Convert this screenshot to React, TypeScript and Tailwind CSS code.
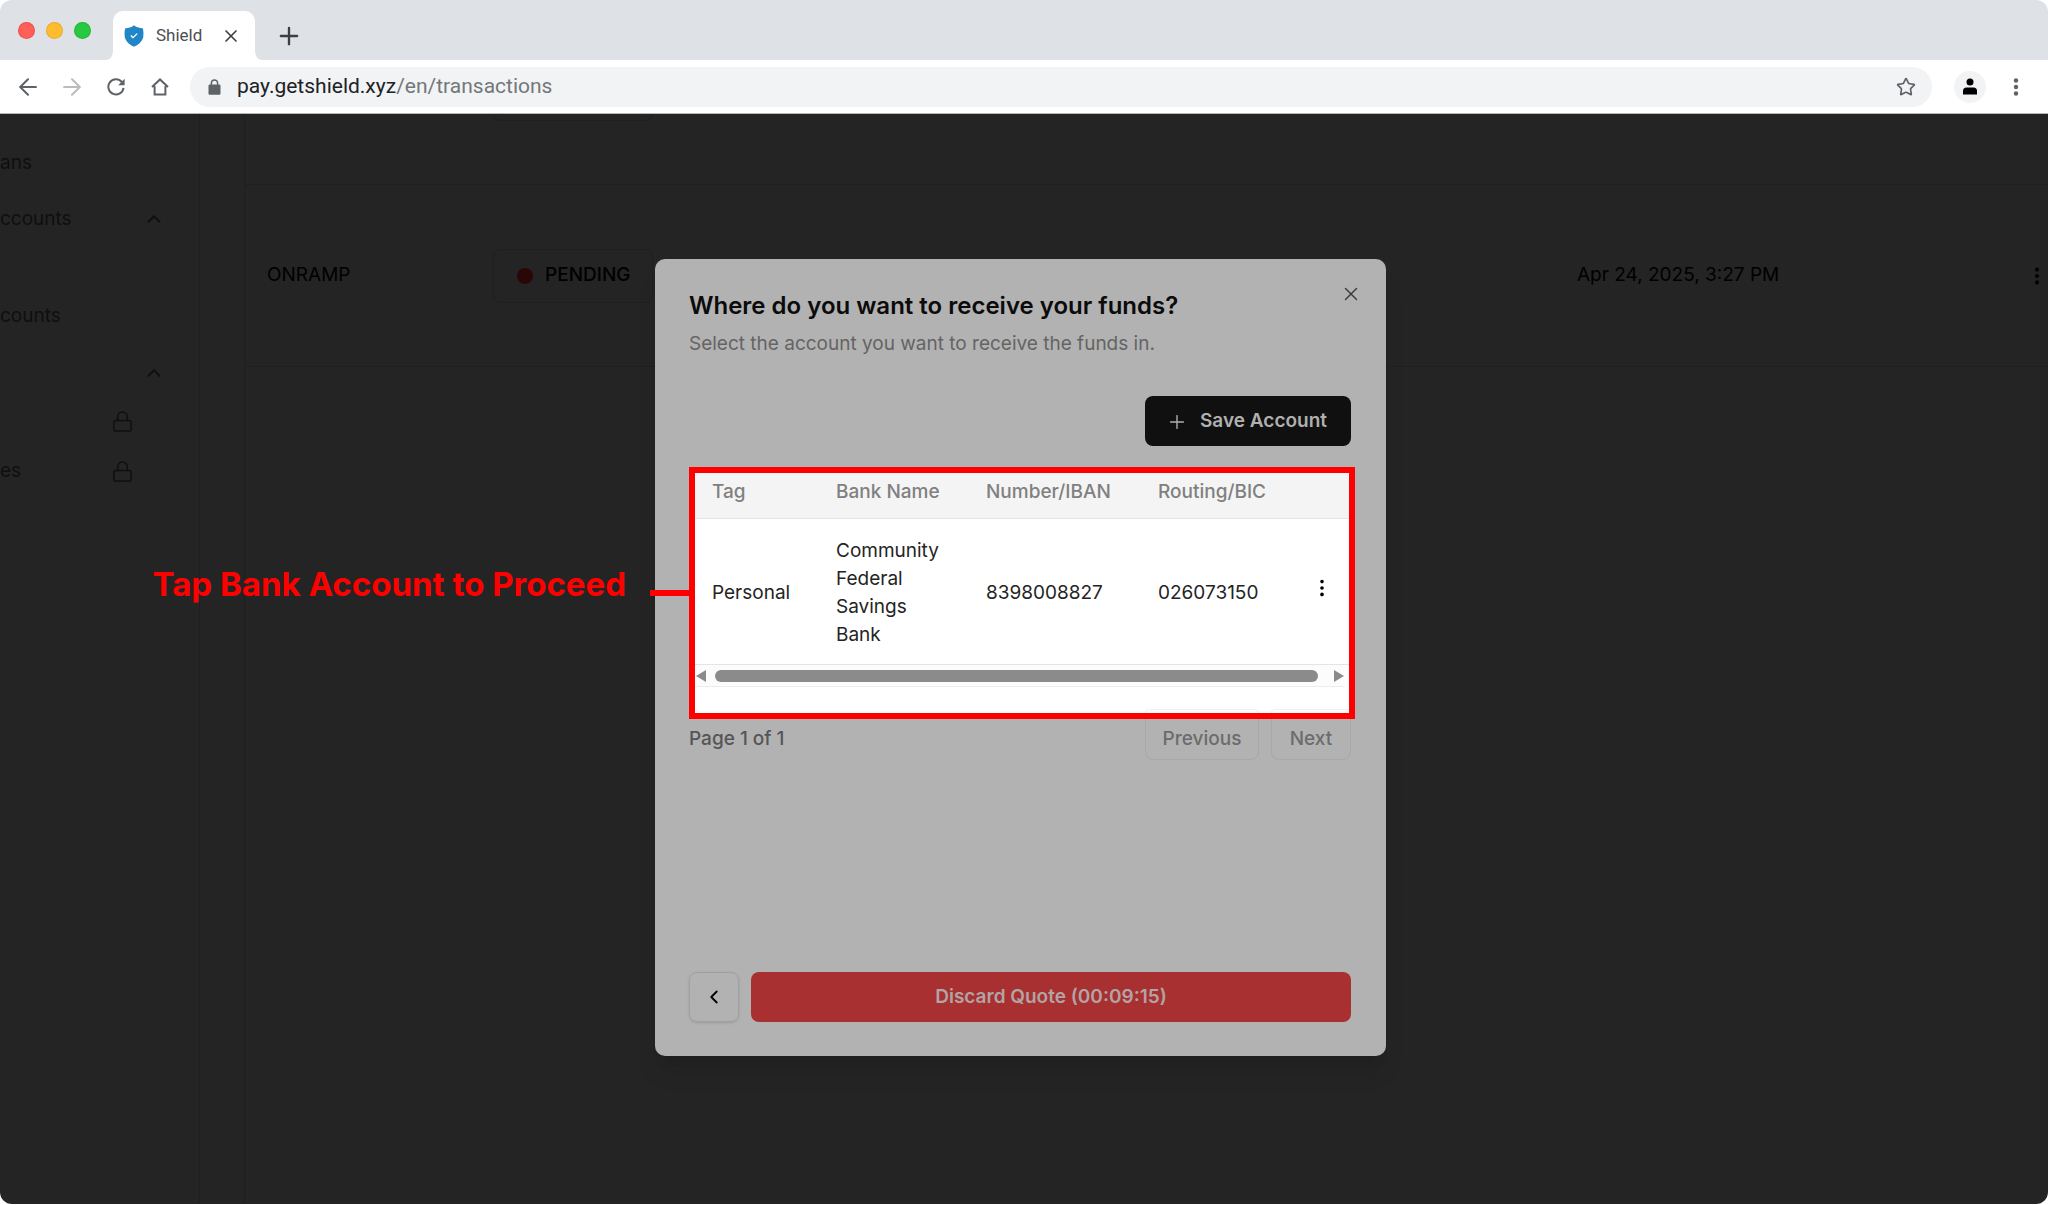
import type { ReactNode } from "react";
import { ChevronLeft, ChevronUp, Lock, MoreVertical, Plus, Star, X } from "lucide-react";

const account = {
  tag: "Personal",
  bank: "Community Federal Savings Bank",
  number: "8398008827",
  routing: "026073150",
};

function ShieldLogo() {
  return (
    <svg viewBox="0 0 20 22" className="h-[22px] w-5" aria-hidden>
      <path
        d="M10 0.3 L12 1.8 Q15 3.2 19 3.4 Q19.9 8 19.2 12.5 Q17.5 18.5 10 21.8 Q2.5 18.5 0.8 12.5 Q0.1 8 1 3.4 Q5 3.2 8 1.8 Z"
        fill="#2186c8"
      />
      <path d="M6.8 10.6 L9 12.6 L13.2 8.6" fill="none" stroke="#fff" strokeWidth="1.3" />
    </svg>
  );
}

function ToolIcon({ children }: { children: ReactNode }) {
  return (
    <svg
      viewBox="0 0 18 18"
      className="size-[18px]"
      fill="none"
      stroke="currentColor"
      strokeWidth="2"
      strokeLinecap="round"
      aria-hidden
    >
      {children}
    </svg>
  );
}

function TabBar() {
  return (
    <div className="flex h-[60px] items-end bg-[#dee1e6] pl-[18px]">
      <div className="mb-[21px] flex gap-[11px]">
        <span className="size-[17px] rounded-full border border-[#e0443e]/60 bg-[#ff5f57]" />
        <span className="size-[17px] rounded-full border border-[#dea123]/60 bg-[#febc2e]" />
        <span className="size-[17px] rounded-full border border-[#1aab29]/60 bg-[#28c840]" />
      </div>
      <div className="ml-[14px] flex items-end">
        <svg viewBox="0 0 8 10" className="h-[10px] w-2" aria-hidden>
          <path d="M8 0 Q8 10 0 10 H8 Z" fill="#fff" />
        </svg>
        <div className="flex h-[49px] w-[142px] items-center rounded-t-[10px] bg-white pl-[11px]">
          <ShieldLogo />
          <span className="ml-3 text-[17px] text-[#4b4e52]">Shield</span>
          <button type="button" aria-label="Close tab" className="ml-[19px] text-[#3c4043]">
            <X size={20} strokeWidth={2} />
          </button>
        </div>
        <svg viewBox="0 0 8 10" className="h-[10px] w-2" aria-hidden>
          <path d="M0 0 Q0 10 8 10 H0 Z" fill="#fff" />
        </svg>
      </div>
      <button type="button" aria-label="New tab" className="mb-[10px] ml-3 text-[#3c4043]">
        <Plus size={28} strokeWidth={2} />
      </button>
    </div>
  );
}

function Toolbar() {
  return (
    <div className="flex h-[54px] items-center border-b border-[#b4b4b4] bg-white pl-[19px] text-[#5f6368]">
      <div className="flex gap-[26px]">
        <button type="button" aria-label="Back">
          <ToolIcon>
            <path d="M17 9 H1.5 M9 1.2 L1.2 9 L9 16.8" />
          </ToolIcon>
        </button>
        <button type="button" aria-label="Forward" className="text-[#babcbe]">
          <ToolIcon>
            <path d="M1 9 H16.5 M9 1.2 L16.8 9 L9 16.8" />
          </ToolIcon>
        </button>
        <button type="button" aria-label="Reload">
          <ToolIcon>
            <path d="M14.8 4 A7.6 7.6 0 1 0 16.5 9.8" strokeLinecap="butt" />
            <path d="M17.6 0.8 V7.2 H11.2 Z" fill="currentColor" stroke="none" />
          </ToolIcon>
        </button>
        <button type="button" aria-label="Home">
          <ToolIcon>
            <path d="M1 9 L9 1.4 L17 9 M3.6 8 V16.6 H14.4 V8" strokeLinecap="butt" />
          </ToolIcon>
        </button>
      </div>
      <div className="ml-[21px] flex h-10 flex-1 items-center rounded-full bg-[#f1f3f4] pr-4 pl-[18px]">
        <svg viewBox="0 0 13 16" className="h-4 w-[13px]" aria-hidden>
          <rect x="0.5" y="5.5" width="12" height="10.3" rx="1.2" fill="currentColor" />
          <path
            d="M3.4 6 V4 A3.1 3.1 0 0 1 9.6 4 V6"
            fill="none"
            stroke="currentColor"
            strokeWidth="1.5"
          />
        </svg>
        <a href="#" className="ml-4 text-[21px] text-[#74777a]">
          <span className="text-[#202124]">pay.getshield.xyz</span>/en/transactions
        </a>
        <button type="button" aria-label="Bookmark" className="ml-auto">
          <Star size={20} strokeWidth={2} strokeLinejoin="miter" />
        </button>
      </div>
      <button
        type="button"
        aria-label="Profile"
        className="ml-[22px] flex size-8 items-center justify-center rounded-full bg-[#f1f3f4] text-black"
      >
        <svg viewBox="0 0 14 17" className="h-[17px] w-[14px]" fill="currentColor" aria-hidden>
          <circle cx="7" cy="4" r="3.5" />
          <path d="M0 16.5 V13 Q0 9.5 3.5 9.5 H10.5 Q14 9.5 14 13 V16.5 Z" />
        </svg>
      </button>
      <button type="button" aria-label="Menu" className="mr-[22px] ml-5">
        <svg viewBox="0 0 20 20" className="size-5" fill="currentColor" aria-hidden>
          <circle cx="10" cy="3.5" r="2.2" />
          <circle cx="10" cy="10" r="2.2" />
          <circle cx="10" cy="16.5" r="2.2" />
        </svg>
      </button>
    </div>
  );
}

function SideRow({ width, label, children }: { width: string; label?: string; children?: ReactNode }) {
  return (
    <div className="flex h-[50px] items-center">
      <span className={`${width} shrink-0 whitespace-nowrap`}>{label}</span>
      {children}
    </div>
  );
}

function Sidebar() {
  return (
    <aside className="w-[200px] shrink-0 border-r border-[#1f1f1f] pt-6 text-[19px] text-[#0f0f0f]">
      <SideRow width="w-[31px]" label="ans" />
      <div className="h-[6px]" />
      <SideRow width="w-[72px]" label="ccounts">
        <ChevronUp size={22} className="ml-[71px]" />
      </SideRow>
      <div className="h-[47px]" />
      <SideRow width="w-[72px]" label="counts" />
      <div className="flex h-[55px] items-end">
        <ChevronUp size={22} className="mb-3 ml-[143px]" />
      </div>
      <SideRow width="w-[21px]">
        <Lock size={23} strokeWidth={1.5} className="ml-[90px]" />
      </SideRow>
      <SideRow width="w-[21px]" label="es">
        <Lock size={23} strokeWidth={1.5} className="ml-[90px]" />
      </SideRow>
    </aside>
  );
}

function Transactions() {
  return (
    <main className="ml-11 flex-1 border-l border-[#1f1f1f] text-[19px] text-black">
      <div className="h-[71px] border-b border-[#1f1f1f] pl-[248px]">
        <div className="h-[7px] w-40 rounded-b-lg border border-t-0 border-[#1f1f1f]" />
      </div>
      <div className="flex h-[182px] items-center border-b border-[#1f1f1f] pl-[22px]">
        <span className="w-[226px]">ONRAMP</span>
        <span className="flex h-[54px] w-40 items-center gap-3 rounded-lg border border-[#1f1f1f] pl-[23px] font-medium">
          <span className="size-4 rounded-full bg-[#2b0606]" />
          PENDING
        </span>
        <span className="ml-auto w-[449px]">Apr 24, 2025, 3:27 PM</span>
        <button type="button" aria-label="Row actions">
          <MoreVertical size={22} strokeWidth={2.5} />
        </button>
      </div>
    </main>
  );
}

function AccountsTable() {
  return (
    <table className="w-full table-fixed text-left">
      <colgroup>
        <col className="w-[124px]" />
        <col className="w-[150px]" />
        <col className="w-[172px]" />
        <col className="w-[152px]" />
        <col />
      </colgroup>
      <thead>
        <tr className="h-[46px] border-b border-[#e4e4e4] bg-[#f4f4f5] text-[#808080]">
          <th className="pb-[6px] pl-[17px] font-medium">Tag</th>
          <th className="pb-[6px] pl-[17px] font-medium">Bank Name</th>
          <th className="pb-[6px] pl-[17px] font-medium whitespace-nowrap">Number/IBAN</th>
          <th className="pb-[6px] pl-[17px] font-medium whitespace-nowrap">Routing/BIC</th>
          <th aria-label="Actions" />
        </tr>
      </thead>
      <tbody>
        <tr className="h-[146px] border-b border-[#e4e4e4] leading-7 text-[#242424]">
          <td className="pt-[2px] pl-[17px]">{account.tag}</td>
          <td className="px-[17px] pt-[2px]">{account.bank}</td>
          <td className="pt-[2px] pl-[17px]">{account.number}</td>
          <td className="pt-[2px] pl-[17px]">{account.routing}</td>
          <td className="pb-2 pl-[18px]">
            <button type="button" aria-label="Account actions" className="block text-black">
              <MoreVertical size={22} strokeWidth={2} />
            </button>
          </td>
        </tr>
      </tbody>
    </table>
  );
}

function ScrollBar() {
  return (
    <div className="mr-1 flex h-[22px] items-center border-b border-[#ececec] bg-[#fcfcfc] px-px">
      <svg viewBox="0 0 10 12" className="h-3 w-[10px] shrink-0" aria-hidden>
        <path d="M10 0 V12 L0 6 Z" fill="#8b8b8b" />
      </svg>
      <div className="mr-4 ml-[9px] h-3 flex-1 rounded-full bg-[#8b8b8b]" />
      <svg viewBox="0 0 10 12" className="h-3 w-[10px] shrink-0" aria-hidden>
        <path d="M0 0 V12 L10 6 Z" fill="#8b8b8b" />
      </svg>
    </div>
  );
}

function Callout() {
  return (
    <div className="absolute inset-y-0 right-full flex items-center gap-6 whitespace-nowrap text-[#ff0000]">
      <strong className="mb-4 text-[33px] font-bold">Tap Bank Account to Proceed</strong>
      <span className="h-[6px] w-[39px] bg-[#ff0000]" />
    </div>
  );
}

function FundsDialog() {
  return (
    <div
      role="dialog"
      aria-labelledby="funds-title"
      className="relative flex h-[797px] w-[731px] flex-col rounded-[10px] bg-[#b2b2b2] pt-[29px] pr-[35px] pb-[34px] pl-[34px] text-[19px] shadow-xl"
    >
      <button type="button" aria-label="Close" className="absolute top-6 right-6 text-[#3a3a3a]">
        <X size={22} strokeWidth={1.5} />
      </button>
      <h2 id="funds-title" className="text-[24px] leading-9 font-semibold text-[#0b0b0b]">
        Where do you want to receive your funds?
      </h2>
      <p className="mt-1 leading-8 text-[#646464]">
        Select the account you want to receive the funds in.
      </p>
      <button
        type="button"
        className="mt-9 flex h-[50px] w-[206px] items-center gap-3 self-end rounded-lg bg-[#101010] pt-[2px] pl-[21px] font-semibold text-[#b0b0b0]"
      >
        <Plus size={22} strokeWidth={1.5} />
        Save Account
      </button>

      <section className="relative mt-[21px] -mr-1 flex h-[252px] flex-col">
        <div className="flex flex-1 flex-col border-[6px] border-[#ff0000] bg-white">
          <AccountsTable />
          <ScrollBar />
          <div className="mt-auto flex justify-end gap-3" aria-hidden>
            <span className="h-1 w-[114px] rounded-t-sm border border-b-0 border-[#f0f0f0]" />
            <span className="h-1 w-[78px] rounded-tl-sm border-t border-l border-[#f0f0f0]" />
          </div>
        </div>
        <Callout />
      </section>

      <div className="-mt-[9px] flex h-[50px] items-center font-medium">
        <span className="pt-[10px] text-[#555]">Page 1 of 1</span>
        <button
          type="button"
          className="ml-auto h-[50px] w-[114px] rounded-lg border border-[#a8a8a8] pt-[10px] text-[#6c6c6c]"
        >
          Previous
        </button>
        <button
          type="button"
          className="ml-3 h-[50px] w-20 rounded-lg border border-[#a8a8a8] pt-[10px] text-[#6c6c6c]"
        >
          Next
        </button>
      </div>

      <div className="mt-auto flex gap-3">
        <button
          type="button"
          aria-label="Back"
          className="flex h-[50px] w-[50px] items-center justify-center rounded-lg border border-[#a0a0a0] text-black shadow-sm"
        >
          <ChevronLeft size={22} />
        </button>
        <button
          type="button"
          className="h-[50px] flex-1 rounded-lg bg-[#a83030] pt-[2px] font-semibold text-[#b2a4a4]"
        >
          Discard Quote (00:09:15)
        </button>
      </div>
    </div>
  );
}

export default function App() {
  return (
    <div className="flex min-h-screen bg-white pb-px">
      <div className="flex flex-1 flex-col overflow-hidden rounded-xl">
        <header className="font-[Roboto,sans-serif]">
          <TabBar />
          <Toolbar />
        </header>
        <div className="relative flex flex-1 bg-[#242424] font-[Inter,sans-serif]">
          <Sidebar />
          <Transactions />
          <div className="absolute inset-0 flex items-center justify-center pr-[7px] pb-1">
            <FundsDialog />
          </div>
        </div>
      </div>
    </div>
  );
}
